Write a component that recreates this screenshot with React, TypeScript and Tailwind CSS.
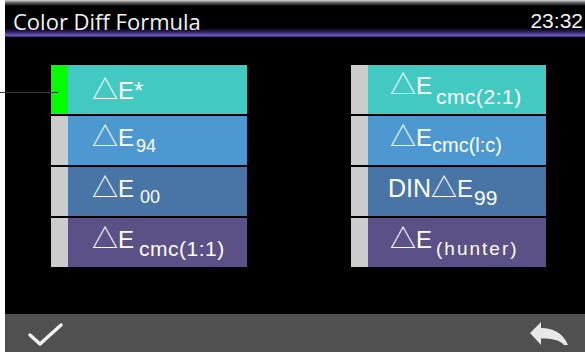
import React from "react";

type Item = {
  bg: string;
  active?: boolean;
  pt: string;
  pl: string;
  body: React.ReactNode;
};

const tri = <span className="font-['Noto_Sans_CJK_JP',sans-serif] text-[26px]">△</span>;
const E = <span className="text-[24px]">E</span>;

const left: Item[] = [
  {
    bg: "bg-[#42cac2]",
    active: true,
    pt: "pt-[10px]",
    pl: "pl-[24px]",
    body: (
      <>
        {tri}
        <span className="text-[24px]">E*</span>
      </>
    ),
  },
  {
    bg: "bg-[#4d98d0]",
    pt: "pt-[6px]",
    pl: "pl-[24px]",
    body: (
      <>
        {tri}
        {E}
        <span className="relative top-[6px] ml-[2px] text-[18px]">94</span>
      </>
    ),
  },
  {
    bg: "bg-[#4874a6]",
    pt: "pt-[6px]",
    pl: "pl-[24px]",
    body: (
      <>
        {tri}
        {E}
        <span className="relative top-[6px] ml-[6px] text-[18px]">00</span>
      </>
    ),
  },
  {
    bg: "bg-[#5b5187]",
    pt: "pt-[6px]",
    pl: "pl-[24px]",
    body: (
      <>
        {tri}
        {E}
        <span className="relative top-[8px] ml-[5px] text-[21px] tracking-[0.5px]">cmc(1:1)</span>
      </>
    ),
  },
];

const right: Item[] = [
  {
    bg: "bg-[#42cac2]",
    pt: "pt-[5px]",
    pl: "pl-[22px]",
    body: (
      <>
        {tri}
        {E}
        <span className="relative top-[10px] ml-[4px] text-[21px] tracking-[0.5px]">cmc(2:1)</span>
      </>
    ),
  },
  {
    bg: "bg-[#4d98d0]",
    pt: "pt-[6px]",
    pl: "pl-[22px]",
    body: (
      <>
        {tri}
        {E}
        <span className="relative top-[6px] text-[20px]">cmc(l:c)</span>
      </>
    ),
  },
  {
    bg: "bg-[#4874a6]",
    pt: "pt-[6px]",
    pl: "pl-[20px]",
    body: (
      <>
        <span className="text-[25px]">DIN</span>
        {tri}
        {E}
        <span className="relative top-[8px] ml-[1px] text-[21px]">99</span>
      </>
    ),
  },
  {
    bg: "bg-[#5b5187]",
    pt: "pt-[6px]",
    pl: "pl-[22px]",
    body: (
      <>
        {tri}
        {E}
        <span className="relative top-[7px] ml-[4px] text-[19px] tracking-[2px]">(hunter)</span>
      </>
    ),
  },
];

function Column({ items, width }: { items: Item[]; width: string }) {
  return (
    <div className={`flex flex-col gap-[2px] ${width}`}>
      {items.map((it, i) => (
        <div key={i} className="flex h-[49px]">
          <div className={`w-[17px] ${it.active ? "bg-[#00ff00]" : "bg-[#cccccc]"}`} />
          <div className={`flex-1 ${it.bg} ${it.pt} ${it.pl}`}>
            <div className="flex items-baseline whitespace-nowrap leading-none text-white font-['Liberation_Sans',Arial,sans-serif]">
              {it.body}
            </div>
          </div>
        </div>
      ))}
    </div>
  );
}

export default function App() {
  return (
    <div className="relative flex h-[352px] w-[585px] overflow-hidden bg-white">
      <div className="ml-[5px] flex flex-1 flex-col bg-black">
        {/* title bar */}
        <div className="flex h-[37px] items-start justify-between pl-[8px] pr-[2px] pt-[10px] bg-[linear-gradient(to_bottom,#dcdcdc_0px,#7a7a7a_2px,#000_6px,#000_28px,#2e2160_32px,#7c5ce2_36px,#000_37px)]">
          <span className="font-['Open_Sans',sans-serif] text-[22px] leading-[22px] text-[#f2f2f2]">
            Color Diff Formula
          </span>
          <span className="font-['Liberation_Sans',Arial,sans-serif] text-[21px] leading-[21px] text-[#f2f2f2]">
            23:32
          </span>
        </div>

        {/* formula buttons */}
        <div className="flex flex-1 gap-[104px] pl-[46px] pt-[28px]">
          <Column items={left} width="w-[196px]" />
          <Column items={right} width="w-[195px]" />
        </div>

        {/* bottom bar */}
        <div className="flex h-[38px] items-center justify-between bg-[#505050] pl-[19px] pr-[15px]">
          <svg width="42" height="38" viewBox="0 0 42 38">
            <polyline
              points="6,21 16,30 37,11"
              fill="none"
              stroke="#f0f0f0"
              strokeWidth="3.5"
              strokeLinecap="round"
              strokeLinejoin="round"
            />
          </svg>
          <svg width="42" height="38" viewBox="0 0 42 38">
            <path
              d="M2 19 L13 8 L13 14 C25 14 35 19 40 31 L36 31 C32 26 25 24.5 13 24.5 L13 31 Z"
              fill="#e8e8e8"
            />
          </svg>
        </div>
      </div>

      {/* focus pointer line */}
      <div className="absolute left-0 top-[92px] h-px w-[58px] bg-[#3a3a3a]" />
    </div>
  );
}
